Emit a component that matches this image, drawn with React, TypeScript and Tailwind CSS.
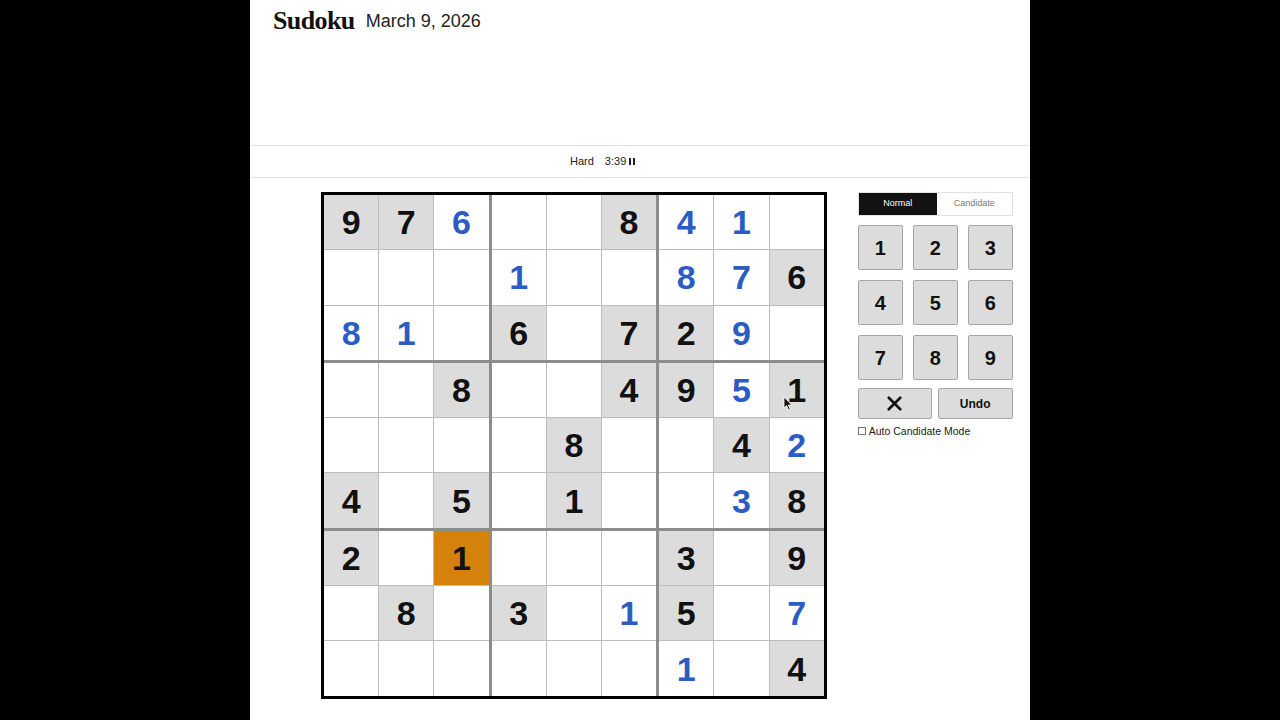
import { X } from "lucide-react";

type Cell = { v: number; kind: "g" | "b" | "e" | "o" };

// g = given (gray), b = entered (blue), o = selected given, e = empty
const rows: string[] = [
  "9g 7g 6b .. .. 8g 4b 1b ..",
  ".. .. .. 1b .. .. 8b 7b 6g",
  "8b 1b .. 6g .. 7g 2g 9b ..",
  ".. .. 8g .. .. 4g 9g 5b 1g",
  ".. .. .. .. 8g .. .. 4g 2b",
  "4g .. 5g .. 1g .. .. 3b 8g",
  "2g .. 1o .. .. .. 3g .. 9g",
  ".. 8g .. 3g .. 1b 5g .. 7b",
  ".. .. .. .. .. .. 1b .. 4g",
];

const board: Cell[][] = rows.map((r) =>
  r.split(" ").map((t) =>
    t === ".." ? { v: 0, kind: "e" } : { v: Number(t[0]), kind: t[1] as Cell["kind"] }
  )
);

function SudokuCell({ cell }: { cell: Cell }) {
  const bg =
    cell.kind === "g" ? "bg-[#dcdcdc]" : cell.kind === "o" ? "bg-[#d4820c]" : "bg-white";
  const color = cell.kind === "b" ? "text-[#2a5cc4]" : "text-[#111]";
  return (
    <div className={`flex h-[54.3px] w-[54.2px] items-center justify-center ${bg}`}>
      {cell.v > 0 && (
        <span className={`text-[34px] font-bold leading-none ${color}`}>{cell.v}</span>
      )}
    </div>
  );
}

function Board() {
  const boxes = [0, 1, 2].flatMap((br) => [0, 1, 2].map((bc) => ({ br, bc })));
  return (
    <div className="border-[3px] border-black bg-[#8c8c8c]">
      <div className="grid grid-cols-3 gap-[3px]">
        {boxes.map(({ br, bc }) => (
          <div key={`${br}-${bc}`} className="grid grid-cols-3 gap-px bg-[#bdbdbd]">
            {[0, 1, 2].flatMap((r) =>
              [0, 1, 2].map((c) => (
                <SudokuCell key={`${r}-${c}`} cell={board[br * 3 + r][bc * 3 + c]} />
              ))
            )}
          </div>
        ))}
      </div>
    </div>
  );
}

function Controls() {
  return (
    <div className="flex w-[155px] flex-col">
      {/* Mode toggle */}
      <div className="flex h-6 border border-[#e3e3e3] text-[9px]">
        <div className="flex w-[78px] items-center justify-center bg-[#121212] text-white">
          Normal
        </div>
        <div className="flex flex-1 items-center justify-center bg-white text-[#777]">
          Candidate
        </div>
      </div>

      {/* Number pad */}
      <div className="mt-[9px] grid grid-cols-3 gap-[10px]">
        {[1, 2, 3, 4, 5, 6, 7, 8, 9].map((n) => (
          <button
            key={n}
            className="flex h-[45px] w-[45px] items-center justify-center rounded-[2px] border border-[#a6a6a6] bg-[#dcdcdc] text-[20px] font-bold text-[#111]"
          >
            {n}
          </button>
        ))}
      </div>

      <div className="mt-2 flex gap-[6px]">
        <button className="flex h-[31px] w-[74px] items-center justify-center rounded-[2px] border border-[#a6a6a6] bg-[#dcdcdc]">
          <X className="h-[23px] w-[23px] text-[#111]" strokeWidth={2.8} />
        </button>
        <button className="flex h-[31px] flex-1 items-center justify-center rounded-[2px] border border-[#a6a6a6] bg-[#dcdcdc] text-[12px] font-bold text-[#111]">
          Undo
        </button>
      </div>

      <label className="mt-[6px] flex items-center gap-[3px] text-[10.5px] leading-[12px] text-[#222]">
        <span className="inline-block h-[8px] w-[8px] border border-[#777] bg-white" />
        Auto Candidate Mode
      </label>
    </div>
  );
}

export default function App() {
  return (
    <div
      className="relative flex h-[720px] w-full justify-center bg-black"
      style={{ fontFamily: '"Liberation Sans", Arial, sans-serif' }}
    >
      <div className="flex h-full w-[780px] flex-col bg-white">
        {/* Header */}
        <div className="flex h-[146px] items-start gap-[11px] border-b border-[#e2e2e2] pl-[23px] pt-[1px]">
          <span
            className="text-[26px] font-bold tracking-[-0.6px] text-[#111]"
            style={{ fontFamily: '"Liberation Serif", "DejaVu Serif", serif' }}
          >
            Sudoku
          </span>
          <span className="pt-[7px] text-[18px] text-[#222]">March 9, 2026</span>
        </div>

        {/* Difficulty / timer bar */}
        <div className="flex h-[32px] items-center border-b border-[#e2e2e2] pl-[320px] text-[11px] text-[#222]">
          <span>Hard</span>
          <span className="ml-[11px]">3:39</span>
          <span className="ml-[3px] flex gap-[2px]">
            <span className="h-[7px] w-[2px] bg-[#222]" />
            <span className="h-[7px] w-[2px] bg-[#222]" />
          </span>
        </div>

        {/* Game */}
        <div className="flex gap-[31px] pl-[71px] pt-[14px]">
          <Board />
          <Controls />
        </div>
      </div>

      {/* Mouse pointer */}
      <svg
        className="absolute left-[783px] top-[396px]"
        width="10"
        height="15"
        viewBox="0 0 10 15"
      >
        <path d="M1 1 L1 12 L3.6 9.6 L5.6 14 L7.2 13.3 L5.3 9 L8.8 9 Z" fill="#111" stroke="#fff" strokeWidth="0.8" />
      </svg>
    </div>
  );
}
